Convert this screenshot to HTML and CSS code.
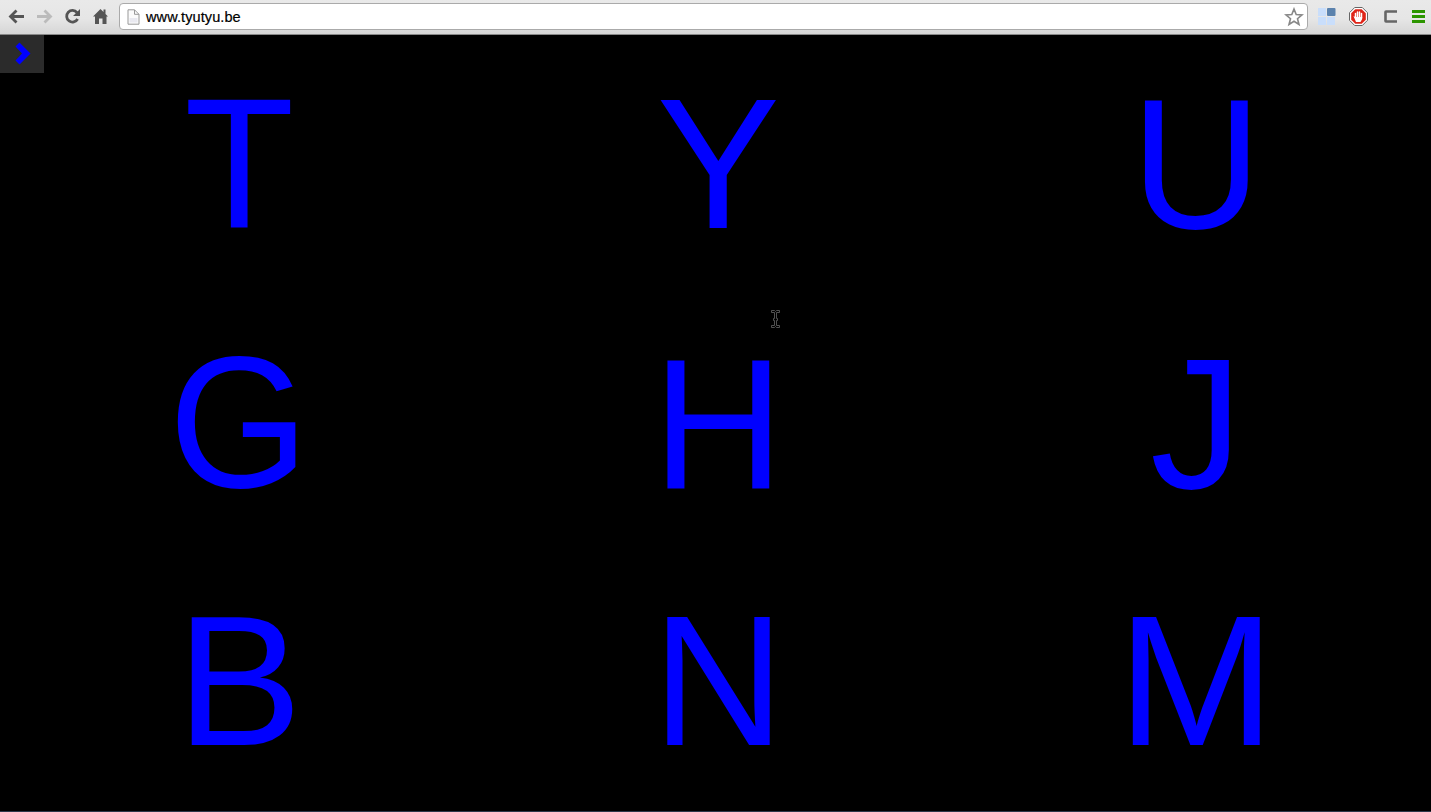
FILE: index.html
```
<!DOCTYPE html>
<html lang="en">
<head>
<meta charset="utf-8">
<title>tyutyu</title>
<link rel="stylesheet" href="styles.css">
</head>
<body>
<header class="toolbar">
  <svg class="nav" width="112" height="34" viewBox="0 0 112 34">
    <g fill="none" stroke="#555" stroke-width="2.8">
      <path d="M24 16.5H11M16.500 10.500L10.500 16.500L16.500 22.500"/>
      <path stroke="#bbb" d="M37 16.500H50M44.500 10.500L50.500 16.500L44.500 22.500"/>
      <path d="M77 12.600A5.800 5.800 0 1 0 77.600 19"/>
    </g>
    <path fill="#555" d="M80 9V16H73zM93 16.500L100.500 9L103.500 12V9.500H105.500V14L108 16.500H106.500V24H102.500V18.500H99V24H95V16.500z"/>
  </svg>
  <div class="address">
    <svg class="page-icon" width="13" height="16" viewBox="0 0 13 16"><path d="M1 .8H7.500L12 5.300V15.200H1z" fill="#fbfbfb" stroke="#999"/><path d="M7.500 .8V5.300H12" fill="none" stroke="#999"/><path d="M2.500 9H10.500V13.500H2.500z" fill="#e9e9f0"/></svg>
    <span class="url">www.tyutyu.be</span>
    <svg class="star" width="20" height="20" viewBox="0 0 20 20"><path d="M10 2L12.200 7.500L18 7.900L13.500 11.700L15 17.500L10 14.300L5 17.500L6.500 11.700L2 7.900L7.800 7.500z" fill="#fff" stroke="#888" stroke-width="1.600"/></svg>
  </div>
  <svg class="extensions" width="123" height="34" viewBox="1308 0 123 34">
    <path fill="#c9defb" d="M1318 8h8v8h-8zM1318 17h8v8h-8zM1327 17h8v8h-8z"/>
    <rect x="1327" y="8" width="8.500" height="8" rx="1" fill="#5b82ad"/>
    <path d="M1354.700 7.500h7.600l5.200 5.200v7.600l-5.200 5.200h-7.600l-5.200-5.200v-7.600z" fill="#fff" stroke="#666"/>
    <path d="M1355.300 9.200h6.400l4.100 4.100v6.400l-4.100 4.100h-6.400l-4.100-4.100v-6.400z" fill="#df2418"/>
    <path d="M1355.500 13.500v4M1357.500 12v5M1359.500 12v5M1361.500 13.500v4" stroke="#fff" stroke-width="1.500" stroke-linecap="round"/>
    <path d="M1353.500 16l2 1h6.700v2l-1.700 3h-4.500z" fill="#fff"/>
    <path d="M1397 11.500H1386Q1385.500 11.500 1385.500 12V21Q1385.500 21.500 1386 21.500H1397" fill="none" stroke="#666" stroke-width="2.600"/>
    <path d="M1412 11.500h13M1412 16.500h13M1412 21.500h13" stroke="#2c9500" stroke-width="3"/>
  </svg>
</header>
<main class="stage">
  <div class="keys">
    <span class="key key-t">T</span><span class="key key-y">Y</span><span class="key key-u">U</span>
    <span class="key key-g">G</span><span class="key key-h">H</span><span class="key key-j">J</span>
    <span class="key key-b">B</span><span class="key key-n">N</span><span class="key key-m">M</span>
  </div>
  <div class="drawer"><svg width="44" height="38" viewBox="0 0 44 38"><path d="M15.500 11.500L19.500 7.500L30.500 18.500L19.500 29.500L15.500 25.500L22 18.500z" fill="#00f"/></svg></div>
  <svg class="cursor" width="9" height="18" viewBox="0 0 9 18"><path d="M.5.5H3.500L4.500 1.500L5.500.5H8.500V2.500H5.500V8.500H6.500V10.500H5.500V15.500H8.500V17.500H5.500L4.500 16.500L3.500 17.500H.5V15.500H3.500V10.500H2.500V8.500H3.500V2.500H.5z" fill="#000" stroke="#666" stroke-width=".8"/></svg>
</main>
</body>
</html>
```
FILE: styles.css
```
* { box-sizing: border-box; }
body {
  margin: 0;
  height: 812px;
  overflow: hidden;
  background: #000;
  font-family: "Liberation Sans", Arial, sans-serif;
}
svg { display: block; flex: none; }
.toolbar {
  display: flex;
  height: 35px;
  background: linear-gradient(#e9e9e9, #e6e6e6 55%, #d6d6d6);
  border-bottom: 1px solid #888;
}
.address {
  display: flex;
  align-items: center;
  width: 1189px;
  height: 27px;
  margin: 3px 0 0 7px;
  padding: 0 3px 0 7px;
  background: #fff;
  border: 1px solid #aaa;
  border-radius: 4px;
}
.url {
  margin-left: 6px;
  font-size: 14.500px;
  line-height: 20px;
  letter-spacing: .1px;
  color: #000;
  -webkit-text-stroke: .2px #000;
}
.star { margin-left: auto; }
.stage {
  position: relative;
  height: 777px;
  overflow: hidden;
  border-bottom: 1px solid #2b3849;
}
.keys {
  display: grid;
  grid-template-columns: repeat(3, 1fr);
  grid-template-rows: repeat(3, 1fr);
  width: 1436px;
  height: 776px;
}
.key {
  display: flex;
  align-items: center;
  justify-content: center;
  font-size: 187px;
  line-height: 1;
  color: #00f;
}
.key-t { transform: translateY(-.6px) scale(.963, .992); }
.key-y { transform: translateY(-.6px) scale(.99, .992); }
.key-u { transform: translateY(-.4px) scale(.968, .992); }
.key-g { transform: translateX(-.5px) scaleX(.963); }
.key-h { transform: translateY(.4px) scale(.975, .992); }
.key-j { transform: translateY(.4px) scale(.99, .992); }
.key-b { transform: translateY(-.4px) scale(1.01, .992); }
.key-n { transform: translateY(-.4px) scale(.98, .992); }
.key-m { transform: translateY(-.4px) scale(1.015, .992); }
.drawer {
  position: absolute;
  top: 0;
  left: 0;
  width: 44px;
  height: 38px;
  background: #2b2b2b;
}
.cursor { position: absolute; left: 771px; top: 275px; }
```
